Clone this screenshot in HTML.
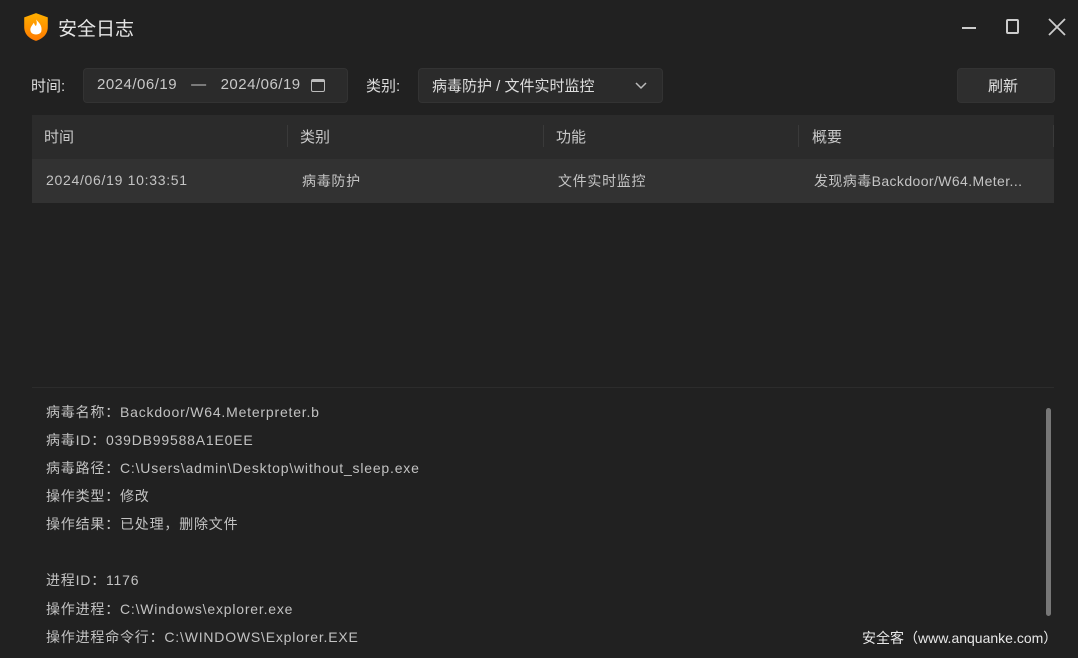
<!DOCTYPE html>
<html><head><meta charset="utf-8"><style>
*{margin:0;padding:0;box-sizing:border-box}
body{width:1078px;height:658px;background:#212121;color:#ddd;font-family:"Liberation Sans","Noto Sans CJK SC",sans-serif;position:relative;overflow:hidden}
.a{position:absolute;white-space:nowrap}
.box{position:absolute;background:#2b2b2b;border:1px solid #333;border-radius:4px}
.hd{font-size:15px;color:#c8c8c8}
.dt{font-size:14px;color:#c4c4c4;letter-spacing:0.7px}
.sep{position:absolute;width:1px;background:#3a3a3a;top:125px;height:22px}
.info{font-size:14px;color:#c2c2c2;left:46px;letter-spacing:0.8px}
</style></head><body>
<svg class="a" style="left:23px;top:12px" width="26" height="30" viewBox="0 0 24 28">
<defs><linearGradient id="g" x1="0" y1="0" x2="0" y2="1"><stop offset="0" stop-color="#ffb000"/><stop offset="1" stop-color="#ff7a00"/></linearGradient></defs>
<path d="M12 1 L23 5 V14 C23 21 18 25 12 27 C6 25 1 21 1 14 V5 Z" fill="url(#g)"/>
<path d="M12 7 C15 10 18 13 17 18 C16 22 8 22 7 18 C6 15 8 13 10 10 C11 13 12 13 12 13 C13 11 13 9 12 7Z" fill="#fff"/>
</svg>
<div class="a" style="left:58px;top:14px;font-size:19px;color:#e6e6e6">安全日志</div>
<div class="a" style="left:962px;top:27px;width:14px;height:2px;background:#ccc"></div>
<div class="a" style="left:1006px;top:19px;width:13px;height:15px;border:2px solid #ccc;border-radius:2px"></div>
<svg class="a" style="left:1048px;top:18px" width="18" height="18"><path d="M1 1 L17 17 M17 1 L1 17" stroke="#ccc" stroke-width="1.8"/></svg>

<div class="a" style="left:31px;top:75px;font-size:15px;color:#ddd">时间:</div>
<div class="box" style="left:83px;top:68px;width:265px;height:35px"></div>
<div class="a" style="left:97px;top:76px;font-size:15px;color:#c8c8c8;letter-spacing:0.5px">2024/06/19&nbsp;&nbsp;&nbsp;—&nbsp;&nbsp;&nbsp;2024/06/19</div>
<div class="a" style="left:311px;top:79px;width:14px;height:13px;border:1.5px solid #bbb;border-radius:2px;border-top-width:3px"></div>

<div class="a" style="left:366px;top:75px;font-size:15px;color:#ddd">类别:</div>
<div class="box" style="left:418px;top:68px;width:245px;height:35px"></div>
<div class="a" style="left:432px;top:75px;font-size:15px;color:#ddd">病毒防护 / 文件实时监控</div>
<svg class="a" style="left:635px;top:82px" width="12" height="8"><path d="M1 1 L6 6 L11 1" stroke="#bbb" stroke-width="1.5" fill="none"/></svg>

<div class="box" style="left:957px;top:68px;width:98px;height:35px;background:#2e2e2e"></div>
<div class="a" style="left:988px;top:75px;font-size:15px;color:#e0e0e0">刷新</div>

<div class="a" style="left:32px;top:115px;width:1022px;height:44px;background:#2b2b2b"></div>
<div class="a" style="left:32px;top:159px;width:1022px;height:44px;background:#323232"></div>
<div class="sep" style="left:287px"></div><div class="sep" style="left:543px"></div><div class="sep" style="left:798px"></div><div class="sep" style="left:1053px"></div>
<div class="a hd" style="left:44px;top:126px">时间</div>
<div class="a hd" style="left:300px;top:126px">类别</div>
<div class="a hd" style="left:556px;top:126px">功能</div>
<div class="a hd" style="left:812px;top:126px">概要</div>
<div class="a dt" style="left:46px;top:172px">2024/06/19 10:33:51</div>
<div class="a dt" style="left:302px;top:171px">病毒防护</div>
<div class="a dt" style="left:558px;top:171px">文件实时监控</div>
<div class="a dt" style="left:814px;top:171px;letter-spacing:0.4px">发现病毒Backdoor/W64.Meter...</div>

<div class="a" style="left:32px;top:387px;width:1022px;height:1px;background:#2c2c2c"></div>
<div class="a info" style="top:402px">病毒名称：Backdoor/W64.Meterpreter.b</div>
<div class="a info" style="top:430px">病毒ID：039DB99588A1E0EE</div>
<div class="a info" style="top:458px">病毒路径：C:\Users\admin\Desktop\without_sleep.exe</div>
<div class="a info" style="top:486px">操作类型：修改</div>
<div class="a info" style="top:514px">操作结果：已处理，删除文件</div>
<div class="a info" style="top:570px">进程ID：1176</div>
<div class="a info" style="top:599px">操作进程：C:\Windows\explorer.exe</div>
<div class="a info" style="top:627px">操作进程命令行：C:\WINDOWS\Explorer.EXE</div>
<div class="a" style="left:1046px;top:408px;width:5px;height:208px;background:#777;border-radius:3px"></div>
<div class="a" style="left:862px;top:628px;font-size:14px;color:#e8e8e8">安全客（www.anquanke.com）</div>
</body></html>
